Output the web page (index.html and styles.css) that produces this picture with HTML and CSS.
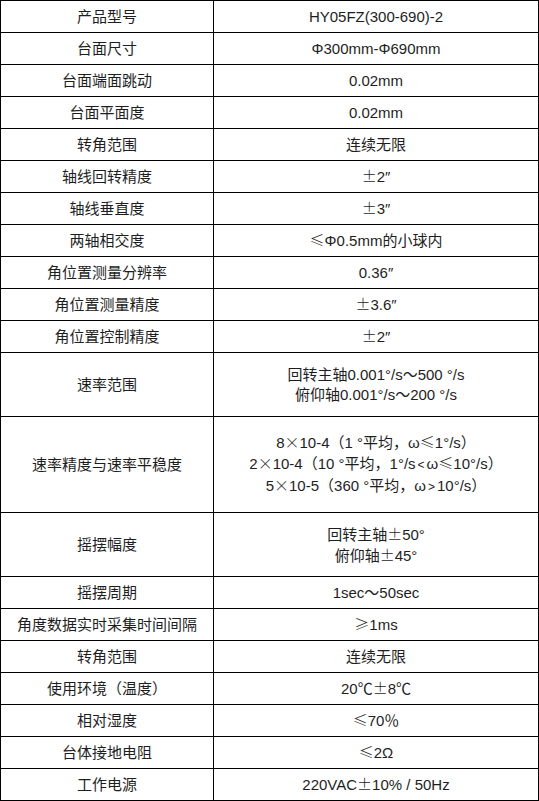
FILE: index.html
```html
<!DOCTYPE html>
<html lang="zh-CN">
<head>
<meta charset="utf-8">
<title>参数</title>
<link rel="stylesheet" href="styles.css">
</head>
<body>
<table class="spec">
  <colgroup><col class="c1"><col class="c2"></colgroup>
  <tbody>
    <tr><td>产品型号</td><td>HY05FZ(300-690)-2</td></tr>
    <tr><td>台面尺寸</td><td>Φ300mm-Φ690mm</td></tr>
    <tr><td>台面端面跳动</td><td>0.02mm</td></tr>
    <tr><td>台面平面度</td><td>0.02mm</td></tr>
    <tr><td>转角范围</td><td>连续无限</td></tr>
    <tr><td>轴线回转精度</td><td><span class="fw">±</span>2″</td></tr>
    <tr><td>轴线垂直度</td><td><span class="fw">±</span>3″</td></tr>
    <tr><td>两轴相交度</td><td><span class="fw">≤</span>Φ0.5mm的小球内</td></tr>
    <tr><td>角位置测量分辨率</td><td>0.36″</td></tr>
    <tr><td>角位置测量精度</td><td><span class="fw">±</span>3.6″</td></tr>
    <tr><td>角位置控制精度</td><td><span class="fw">±</span>2″</td></tr>
    <tr class="r2"><td>速率范围</td><td>回转主轴0.001°/s～500 °/s<br>俯仰轴0.001°/s～200 °/s</td></tr>
    <tr class="r3"><td>速率精度与速率平稳度</td><td>8<span class="fw">×</span>10-4（1 °平均，ω<span class="fw">≤</span>1°/s）<br>2<span class="fw">×</span>10-4（10 °平均，1°/s<span class="lt">&lt;</span>ω<span class="fw">≤</span>10°/s）<br>5<span class="fw">×</span>10-5（360 °平均，ω<span class="lt">&gt;</span>10°/s）</td></tr>
    <tr class="r2"><td>摇摆幅度</td><td>回转主轴<span class="fw">±</span>50°<br>俯仰轴<span class="fw">±</span>45°</td></tr>
    <tr><td>摇摆周期</td><td>1sec～50sec</td></tr>
    <tr><td>角度数据实时采集时间间隔</td><td><span class="fw">≥</span>1ms</td></tr>
    <tr><td>转角范围</td><td>连续无限</td></tr>
    <tr><td>使用环境（温度）</td><td>20℃<span class="fw">±</span>8℃</td></tr>
    <tr><td>相对湿度</td><td><span class="fw">≤</span>70％</td></tr>
    <tr><td>台体接地电阻</td><td><span class="fw">≤</span>2Ω</td></tr>
    <tr><td>工作电源</td><td>220VAC<span class="fw">±</span>10% / 50Hz</td></tr>
  </tbody>
</table>
</body>
</html>
```

FILE: styles.css
```css
html, body {
  margin: 0;
  padding: 0;
  background: #fff;
}
.spec {
  border-collapse: collapse;
  table-layout: fixed;
  width: 538px;
  font-family: "Liberation Sans", "Noto Sans CJK SC", sans-serif;
  font-size: 15px;
  line-height: 20px;
  color: #1e1e1e;
}
.spec .c1 { width: 213px; }
.spec .c2 { width: 325px; }
.spec td {
  border: 1px solid #000;
  padding: 0;
  height: 31px;
  text-align: center;
  vertical-align: middle;
  white-space: nowrap;
}
.spec tr.r2 td { height: 63px; }
.spec tr.r3 td { height: 95px; }
.spec .fw {
  font-family: "Noto Sans CJK SC", sans-serif;
  font-feature-settings: "fwid" 1;
  font-weight: 300;
}
.spec .lt {
  font-size: 12px;
  margin: 0 2px;
}
```
